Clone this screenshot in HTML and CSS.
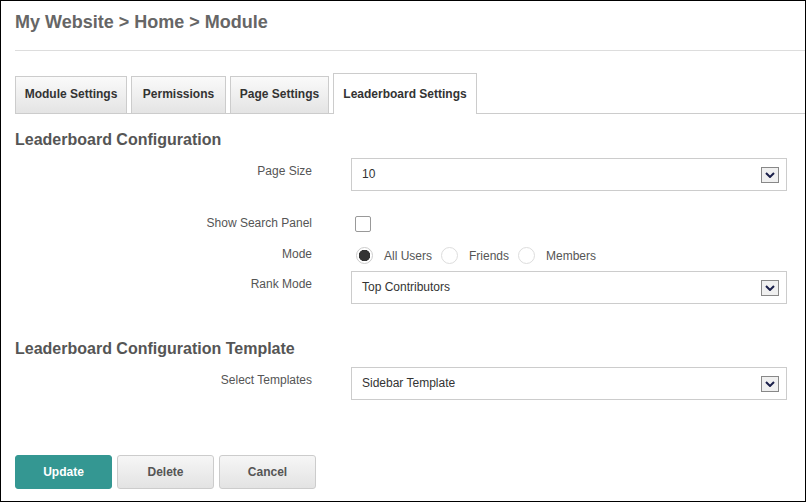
FILE: index.html
```html
<!DOCTYPE html>
<html>
<head>
<meta charset="utf-8">
<link rel="stylesheet" href="styles.css">
</head>
<body>
<div class="frame">
  <h1 class="title">My Website &gt; Home &gt; Module</h1>
  <div class="rule"></div>
  <div class="tabs">
    <div class="tab t1">Module Settings</div>
    <div class="tab t2">Permissions</div>
    <div class="tab t3">Page Settings</div>
    <div class="tab t4 active">Leaderboard Settings</div>
  </div>

  <h2 class="section first">Leaderboard Configuration</h2>
  <div class="row row-pagesize">
    <label class="label lbl-select">Page Size</label>
    <div class="select"><span>10</span><span class="drop"><svg width="10" height="6" viewBox="0 0 10 6"><path d="M1 1 L5 5 L9 1" fill="none" stroke="#1a1f4a" stroke-width="2"/></svg></span></div>
  </div>
  <div class="row row-search">
    <label class="label">Show Search Panel</label>
    <div class="control"><span class="checkbox"></span></div>
  </div>
  <div class="row row-mode">
    <label class="label">Mode</label>
    <div class="control radios">
      <span class="radio checked"></span><span class="rtext">All Users</span>
      <span class="radio"></span><span class="rtext">Friends</span>
      <span class="radio"></span><span class="rtext">Members</span>
    </div>
  </div>
  <div class="row row-rank">
    <label class="label lbl-select">Rank Mode</label>
    <div class="select"><span>Top Contributors</span><span class="drop"><svg width="10" height="6" viewBox="0 0 10 6"><path d="M1 1 L5 5 L9 1" fill="none" stroke="#1a1f4a" stroke-width="2"/></svg></span></div>
  </div>

  <h2 class="section second">Leaderboard Configuration Template</h2>
  <div class="row row-template">
    <label class="label lbl-select">Select Templates</label>
    <div class="select"><span>Sidebar Template</span><span class="drop"><svg width="10" height="6" viewBox="0 0 10 6"><path d="M1 1 L5 5 L9 1" fill="none" stroke="#1a1f4a" stroke-width="2"/></svg></span></div>
  </div>

  <div class="buttons">
    <button class="btn primary">Update</button>
    <button class="btn">Delete</button>
    <button class="btn">Cancel</button>
  </div>
</div>
</body>
</html>
```

FILE: styles.css
```css
html, body {
  margin: 0;
  padding: 0;
  background: #fff;
}
body {
  font-family: "Liberation Sans", Arial, sans-serif;
  font-size: 12px;
  color: #555;
}
.frame {
  box-sizing: border-box;
  width: 806px;
  height: 502px;
  border: 1px solid #000;
  padding-left: 14px;
}
.title {
  margin: 0;
  padding-top: 11px;
  font-size: 18px;
  line-height: 21px;
  font-weight: bold;
  color: #666;
}
.rule {
  margin-top: 17px;
  height: 1px;
  background: #ddd;
}
.tabs {
  margin-top: 22px;
  display: flex;
  align-items: flex-end;
  gap: 4px;
  border-bottom: 1px solid #ccc;
}
.tab {
  box-sizing: border-box;
  height: 37px;
  padding: 10px 0 0;
  text-align: center;
  line-height: 14px;
  font-size: 12px;
  font-weight: bold;
  color: #333;
  border: 1px solid #ccc;
  border-bottom: none;
  background: linear-gradient(#fafafa, #e4e4e4);
}
.t1 { width: 112px; }
.t2 { width: 95px; }
.t3 { width: 99px; }
.t4 { width: 144px; }
.tab.active {
  height: 41px;
  padding-top: 13px;
  margin-bottom: -1px;
  background: #fff;
}
.section {
  margin: 0;
  font-size: 16px;
  line-height: 18px;
  font-weight: bold;
  color: #555;
}
.section.first { margin-top: 17px; }
.section.second { margin-top: 36px; }
.row {
  display: grid;
  grid-template-columns: 297px 436px;
  column-gap: 39px;
  align-items: start;
}
.label {
  text-align: right;
  line-height: 14px;
  color: #555;
}
.lbl-select { padding-top: 6px; }
.row-pagesize { margin-top: 9px; }
.row-search { margin-top: 25px; }
.row-mode { margin-top: 15px; }
.row-rank { margin-top: 7px; }
.row-template { margin-top: 9px; }
.select {
  box-sizing: border-box;
  height: 33px;
  border: 1px solid #ccc;
  padding: 0 7px 0 10px;
  display: flex;
  align-items: center;
  justify-content: space-between;
  color: #333;
  line-height: 14px;
}
.select > span:first-child { margin-top: -2px; }
.drop {
  box-sizing: border-box;
  width: 18px;
  height: 16px;
  border: 1px solid #888;
  background: #f0f0f0;
  display: flex;
  align-items: center;
  justify-content: center;
}
.drop svg { display: block; }
.control {
  display: flex;
  align-items: center;
  padding-left: 4px;
}
.checkbox {
  box-sizing: border-box;
  width: 16px;
  height: 16px;
  border: 1px solid #999;
  border-radius: 2px;
  background: #fff;
}
.radios { padding-left: 5px; }
.radio {
  box-sizing: border-box;
  width: 17px;
  height: 17px;
  border: 1px solid #ddd;
  border-radius: 50%;
  background: #fff;
  margin-right: 11px;
}
.radio.checked {
  background: radial-gradient(circle, #333 0, #333 5.5px, #fff 6px);
  border-color: #ccc;
}
.rtext {
  line-height: 14px;
  color: #555;
  margin-right: 9px;
}
.buttons {
  margin-top: 55px;
  display: flex;
  gap: 5px;
}
.btn {
  box-sizing: border-box;
  width: 97px;
  height: 34px;
  border: 1px solid #ccc;
  border-radius: 3px;
  background: linear-gradient(#f6f6f6, #e3e3e3);
  font-family: "Liberation Sans", Arial, sans-serif;
  font-size: 12px;
  font-weight: bold;
  color: #555;
  padding: 0;
}
.btn.primary {
  background: #349792;
  border-color: #349792;
  color: #fff;
}
```
